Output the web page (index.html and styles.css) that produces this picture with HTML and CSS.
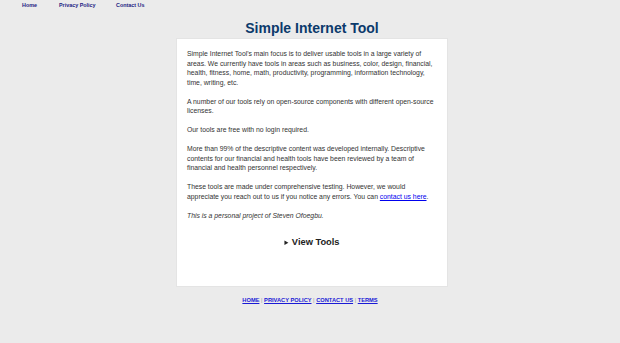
FILE: index.html
```html
<!DOCTYPE html>
<html lang="en">
<head>
<meta charset="utf-8">
<title>Simple Internet Tool</title>
<link rel="stylesheet" href="styles.css">
</head>
<body>
<nav class="topnav">
  <a href="#" class="nav-home">Home</a>
  <a href="#" class="nav-privacy">Privacy Policy</a>
  <a href="#" class="nav-contact">Contact Us</a>
</nav>
<h1 class="title">Simple Internet Tool</h1>
<main class="card">
  <p>Simple Internet Tool's main focus is to deliver usable tools in a large variety of areas. We currently have tools in areas such as business, color, design, financial, health, fitness, home, math, productivity, programming, information technology, time, writing, etc.</p>
  <p>A number of our tools rely on open-source components with different open-source licenses.</p>
  <p>Our tools are free with no login required.</p>
  <p>More than 99% of the descriptive content was developed internally. Descriptive contents for our financial and health tools have been reviewed by a team of financial and health personnel respectively.</p>
  <p>These tools are made under comprehensive testing. However, we would appreciate you reach out to us if you notice any errors. You can <a href="#" class="inline-link">contact us here</a>.</p>
  <p class="note">This is a personal project of Steven Ofoegbu.</p>
  <details class="tools">
    <summary>View Tools</summary>
  </details>
</main>
<footer class="footer">
  <a href="#">HOME</a> <span class="sep">|</span> <a href="#">PRIVACY POLICY</a> <span class="sep">|</span> <a href="#">CONTACT US</a> <span class="sep">|</span> <a href="#">TERMS</a>
</footer>
</body>
</html>
```

FILE: styles.css
```css
html, body {
  margin: 0;
  padding: 0;
}
body {
  background: #ebebeb;
  font-family: "Liberation Sans", Arial, sans-serif;
  color: #333;
  width: 620px;
  height: 343px;
}
.topnav {
  display: flex;
  padding: 2px 0 0 22px;
  height: 9px;
  font-size: 5.4px;
  font-weight: bold;
}
.topnav a {
  color: #232383;
  text-decoration: none;
}
.nav-home { width: 37px; }
.nav-privacy { width: 57px; }
.title {
  margin: 9px 0 0 4px;
  text-align: center;
  font-size: 14px;
  line-height: 17px;
  color: #0b3a6b;
  font-weight: bold;
}
.card {
  width: 250px;
  margin: 1px auto 0;
  padding: 10px 10px 0;
  height: 237px;
  background: #fff;
  border: 1px solid #e4e4e4;
  font-size: 6.83px;
  line-height: 9.5px;
  position: relative;
  left: 2px;
}
.card p {
  margin: 0 0 9.5px;
}
.inline-link {
  color: #0000ee;
}
.note {
  font-style: italic;
}
.tools {
  margin-top: 18px;
  text-align: center;
}
.tools summary {
  font-size: 9.3px;
  font-weight: bold;
  color: #222;
  cursor: pointer;
  list-style-position: inside;
}
.tools summary::marker {
  font-size: 7px;
}
.footer {
  text-align: center;
  margin: 10px 0 0 0;
  font-size: 5.7px;
  font-weight: bold;
  color: #999;
}
.footer a {
  color: #1a1ad6;
}
.sep {
  font-weight: normal;
}
```
